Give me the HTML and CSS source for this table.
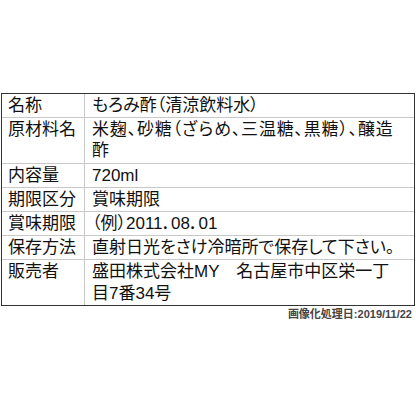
FILE: index.html
```html
<!DOCTYPE html>
<html lang="ja">
<head>
<meta charset="utf-8">
<link rel="stylesheet" href="styles.css">
</head>
<body>
<div class="sheet">
  <table class="label-table">
    <tr><th>名称</th><td>もろみ酢（清涼飲料水）</td></tr>
    <tr><th>原材料名</th><td class="loose">米麹、砂糖（ざらめ、三温糖、黒糖）、醸造酢</td></tr>
    <tr><th>内容量</th><td>720ml</td></tr>
    <tr><th>期限区分</th><td>賞味期限</td></tr>
    <tr><th>賞味期限</th><td>（例）2011．08．01</td></tr>
    <tr><th>保存方法</th><td>直射日光をさけ冷暗所で保存して下さい。</td></tr>
    <tr><th>販売者</th><td>盛田株式会社MY　名古屋市中区栄一丁目7番34号</td></tr>
  </table>
  <p class="stamp">画像化処理日:2019/11/22</p>
</div>
</body>
</html>
```

FILE: styles.css
```css
html, body {
  margin: 0;
  padding: 0;
  background: #fff;
}

.sheet {
  padding-top: 93px;
  padding-left: 1px;
}

.label-table {
  width: 414px;
  table-layout: fixed;
  border: 1px solid #333;
  border-collapse: separate;
  border-spacing: 0;
  font-family: "Liberation Sans", "Noto Sans CJK JP", sans-serif;
  font-size: 17px;
  line-height: 21.2px;
  font-feature-settings: "palt";
  color: #111;
}

.label-table th,
.label-table td {
  box-sizing: border-box;
  padding: 1px 10px 1px 7px;
  text-align: left;
  vertical-align: top;
  font-weight: normal;
}

.label-table th {
  width: 82px;
  padding-left: 6px;
  padding-right: 0;
}

.label-table td {
  border-left: 1px solid #c8c8c8;
}

.label-table tr + tr th,
.label-table tr + tr td {
  border-top: 1px solid #c8c8c8;
}

.label-table .loose {
  letter-spacing: 0.8px;
}

.stamp {
  margin: 0;
  width: 411px;
  text-align: right;
  font-family: "Liberation Sans", "Noto Sans CJK JP", sans-serif;
  font-size: 11px;
  line-height: 16px;
  font-weight: bold;
  color: #444;
}
```
